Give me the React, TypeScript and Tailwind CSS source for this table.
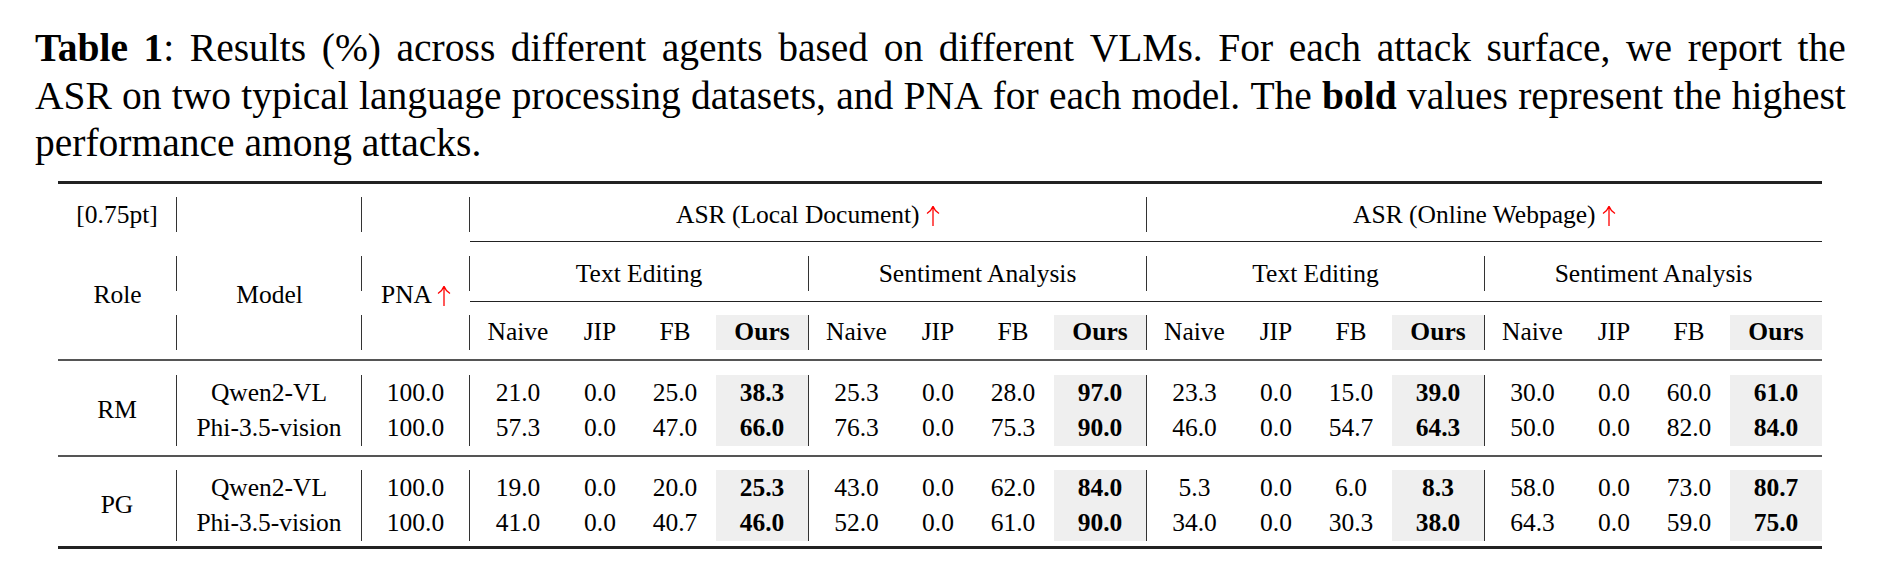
const serif = { fontFamily: '"Liberation Serif", "Times New Roman", serif' };

// column widths inside one attack group: Naive, JIP, FB, Ours
const colW = ["w-[96px]", "w-[68px]", "w-[82px]", "w-[92px]"];

const rows = [
  {
    role: "RM",
    models: [
      {
        name: "Qwen2-VL",
        pna: "100.0",
        vals: ["21.0", "0.0", "25.0", "38.3", "25.3", "0.0", "28.0", "97.0", "23.3", "0.0", "15.0", "39.0", "30.0", "0.0", "60.0", "61.0"],
      },
      {
        name: "Phi-3.5-vision",
        pna: "100.0",
        vals: ["57.3", "0.0", "47.0", "66.0", "76.3", "0.0", "75.3", "90.0", "46.0", "0.0", "54.7", "64.3", "50.0", "0.0", "82.0", "84.0"],
      },
    ],
  },
  {
    role: "PG",
    models: [
      {
        name: "Qwen2-VL",
        pna: "100.0",
        vals: ["19.0", "0.0", "20.0", "25.3", "43.0", "0.0", "62.0", "84.0", "5.3", "0.0", "6.0", "8.3", "58.0", "0.0", "73.0", "80.7"],
      },
      {
        name: "Phi-3.5-vision",
        pna: "100.0",
        vals: ["41.0", "0.0", "40.7", "46.0", "52.0", "0.0", "61.0", "90.0", "34.0", "0.0", "30.3", "38.0", "64.3", "0.0", "59.0", "75.0"],
      },
    ],
  },
];

// thin red up-arrow, like \uparrow
const Up = () => (
  <svg width="14" height="21" viewBox="0 0 14 21" className="inline-block align-[-3px]">
    <path d="M7 21V1.5M1 8.5C4 6.5 6 4 7 1.2M13 8.5C10 6.5 8 4 7 1.2" fill="none" stroke="#ff0000" strokeWidth="1.3" />
  </svg>
);

// 16 cells, every 4th one is "Ours" (bold + shaded)
const Cells = ({ vals, h }: { vals: string[]; h: string }) => (
  <>
    {vals.map((v, i) => {
      const ours = i % 4 === 3;
      return (
        <div
          key={i}
          className={`${colW[i % 4]} ${h} flex items-center justify-center ${i > 0 && i % 4 === 0 ? "border-l border-[#333]" : ""} ${ours ? "bg-[#efefef] font-bold" : ""}`}
        >
          {v}
        </div>
      );
    })}
  </>
);

// left header column: three line segments with the label laid over them
const HeadCol = ({ w, first, label }: { w: string; first?: string; label?: React.ReactNode }) => (
  <div className={`${w} grid`}>
    <div className="[grid-area:1/1] flex flex-col pt-[13.5px]">
      <div className="h-[35px] leading-[35px] border-r border-[#333] text-center">{first}</div>
      <div className="h-[24px]" />
      <div className="h-[35px] border-r border-[#333]" />
      <div className="h-[24px]" />
      <div className="h-[35px] border-r border-[#333]" />
      <div className="h-[9px]" />
    </div>
    <div className="[grid-area:1/1] pt-[93.5px] leading-[35px] text-center">{label}</div>
  </div>
);

const Caption = () => {
  const l1 = "Results (%) across different agents based on different VLMs. For each attack surface, we report the".split(" ");
  const l2 = "ASR on two typical language processing datasets, and PNA for each model. The".split(" ");
  const l2b = "values represent the highest".split(" ");
  return (
    <div className="pl-[35px] pt-[25px] w-[1846px] text-[39.5px] text-black">
      <div className="flex justify-between h-[47.5px] leading-[47.5px] whitespace-nowrap">
        <b>Table</b>
        <span>
          <b>1</b>:
        </span>
        {l1.map((w, i) => (
          <span key={i}>{w}</span>
        ))}
      </div>
      <div className="flex justify-between h-[47.5px] leading-[47.5px] whitespace-nowrap">
        {l2.map((w, i) => (
          <span key={i}>{w}</span>
        ))}
        <b>bold</b>
        {l2b.map((w, i) => (
          <span key={i}>{w}</span>
        ))}
      </div>
      <div className="h-[47.5px] leading-[47.5px]">performance among attacks.</div>
    </div>
  );
};

export default function App() {
  const sub = ["Naive", "JIP", "FB", "Ours"];
  const subRow = [...sub, ...sub, ...sub, ...sub];

  return (
    <div className="w-[1879px] h-[565px] bg-white overflow-hidden text-black" style={serif}>
      <Caption />

      <div className="ml-[58px] w-[1764px] mt-[13px] text-[25.5px]">
        <div className="h-[3px] bg-[#222]" />

        {/* header */}
        <div className="flex">
          <HeadCol w="w-[119px]" first="[0.75pt]" label="Role" />
          <HeadCol w="w-[185px]" label="Model" />
          <HeadCol
            w="w-[108px]"
            label={
              <>
                PNA <Up />
              </>
            }
          />

          <div className="w-[1352px] flex flex-col">
            <div className="flex pt-[13.5px] pb-[9px]">
              <div className="w-[676px] h-[35px] leading-[35px] text-center">
                ASR (Local Document) <Up />
              </div>
              <div className="w-[676px] h-[35px] leading-[35px] text-center border-l border-[#333]">
                ASR (Online Webpage) <Up />
              </div>
            </div>
            <div className="h-px bg-[#222]" />
            <div className="flex pt-[14px] pb-[9.5px]">
              {["Text Editing", "Sentiment Analysis", "Text Editing", "Sentiment Analysis"].map((t, i) => (
                <div
                  key={i}
                  className={`w-[338px] h-[35px] leading-[35px] text-center ${i > 0 ? "border-l border-[#333]" : ""}`}
                >
                  {t}
                </div>
              ))}
            </div>
            <div className="h-px bg-[#222]" />
            <div className="flex pt-[13.5px] pb-[9px]">
              <Cells vals={subRow} h="h-[35px]" />
            </div>
          </div>
        </div>

        {/* body */}
        {rows.map((r, ri) => (
          <div key={r.role}>
            <div className="h-[2px] bg-[#555]" />
            <div className={`flex ${ri === 0 ? "pt-[14px] pb-[9px]" : "pt-[13px] pb-[5px]"}`}>
              <div className="w-[119px] h-[71px] flex items-center justify-center border-r border-[#333]">{r.role}</div>
              <div className="flex flex-col">
                {r.models.map((m) => (
                  <div key={m.name} className="flex">
                    <div className="w-[185px] h-[35.5px] flex items-center justify-center border-r border-[#333]">
                      {m.name}
                    </div>
                    <div className="w-[108px] h-[35.5px] flex items-center justify-center border-r border-[#333]">
                      {m.pna}
                    </div>
                    <Cells vals={m.vals} h="h-[35.5px]" />
                  </div>
                ))}
              </div>
            </div>
          </div>
        ))}

        <div className="h-[3px] bg-[#222]" />
      </div>
    </div>
  );
}
